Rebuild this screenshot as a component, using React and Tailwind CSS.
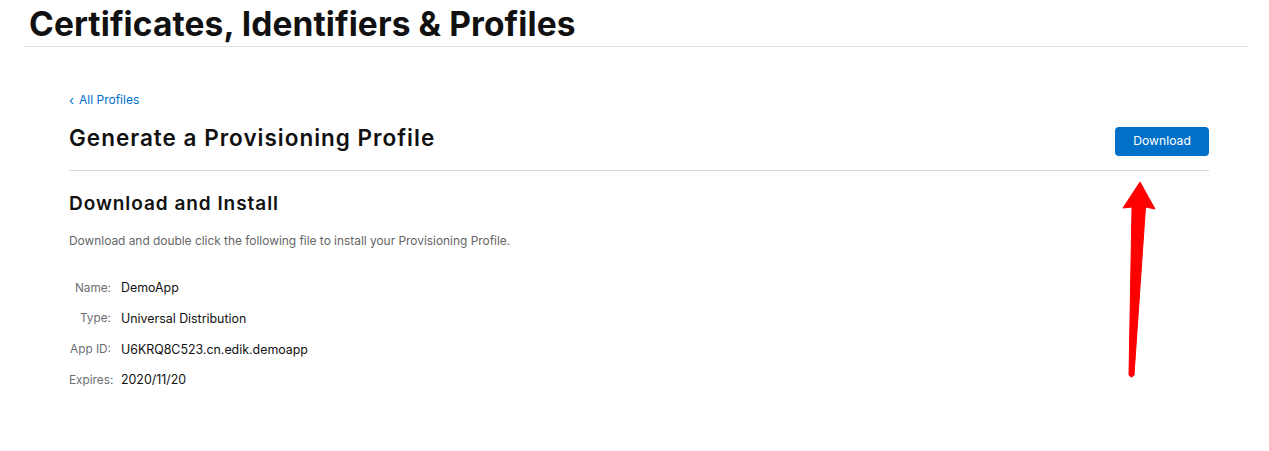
import React from 'react';

const details = [
    { label: 'Name:', value: 'DemoApp' },
    { label: 'Type:', value: 'Universal Distribution' },
    { label: 'App ID:', value: 'U6KRQ8C523.cn.edik.demoapp' },
    { label: 'Expires:', value: '2020/11/20' },
];

const RedArrow = () => (
    <svg className="absolute left-0 top-0 pointer-events-none" width="1269" height="451" viewBox="0 0 1269 451">
        <path
            d="M1140 182 L1155 209 L1145.5 207 L1134 375 Q1131.5 379 1129 375 L1132 207 L1123 208 Z"
            fill="#ff0000"
            stroke="#ff0000"
            strokeWidth="1"
            strokeLinejoin="round"
        />
    </svg>
);

const App = () => {
    return (
        <div className="relative w-[1269px] h-[451px] bg-white overflow-hidden font-['Inter',sans-serif] text-[#111]">
            {/* Header */}
            <div className="mx-6 mr-5 border-b border-[#e3e3e3] pl-[5px] pt-[5px] pb-[3px]">
                <h1 className="text-[33.5px] leading-[38px] font-bold tracking-[0.1px] text-[#111]">Certificates, Identifiers &amp; Profiles</h1>
            </div>

            {/* Content */}
            <div className="ml-[69px] mr-[60px] pt-[45px]">
                <a href="#" className="flex items-center gap-[5px] text-[12px] leading-[16px] text-[#0070c9]">
                    <span className="text-[13px] leading-[16px]">‹</span>
                    <span>All Profiles</span>
                </a>

                <div className="flex items-start justify-between mt-[13px] pb-[14px] border-b border-[#d6d6d6]">
                    <h2 className="mt-[3px] text-[22.5px] leading-[28px] font-semibold tracking-[1px]">Generate a Provisioning Profile</h2>
                    <button className="w-[94px] h-[29px] mt-[6px] rounded-[4px] bg-[#0070c9] text-white text-[12.2px]">
                        Download
                    </button>
                </div>

                <h3 className="mt-[20px] text-[19px] leading-[26px] font-semibold tracking-[0.95px]">Download and Install</h3>
                <p className="mt-[16px] text-[11.9px] leading-[16px] text-[#666]">
                    Download and double click the following file to install your Provisioning Profile.
                </p>

                <div className="mt-[31px] flex flex-col gap-[13.7px]">
                    {details.map((d) => (
                        <div key={d.label} className="flex items-center h-[17px]">
                            <span className="w-[42px] text-right text-[11.8px] text-[#6e6e73]">{d.label}</span>
                            <span className="ml-[10px] text-[12.4px] text-[#111]">{d.value}</span>
                        </div>
                    ))}
                </div>
            </div>

            <RedArrow />
        </div>
    );
};

export default App;
